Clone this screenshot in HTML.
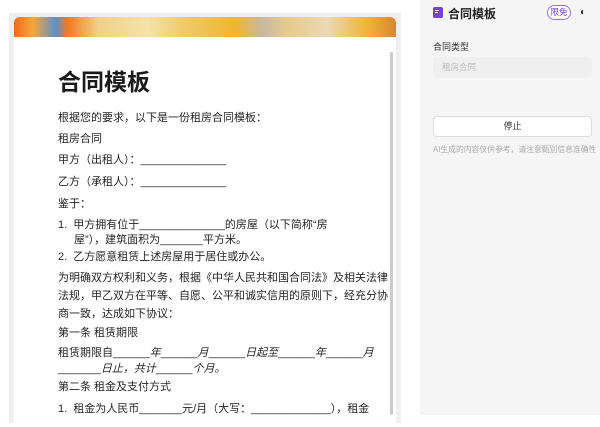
<!DOCTYPE html>
<html><head><meta charset="utf-8"><style>
*{margin:0;padding:0;box-sizing:border-box}
body{width:600px;height:415px;overflow:hidden;background:#fff;font-family:"Liberation Sans","Noto Sans CJK SC",sans-serif;color:#222;position:relative}
.frame{position:absolute;left:9px;top:13px;width:392px;height:410px;background:#efefef}
.card{position:absolute;left:14px;top:17px;width:382px;height:410px;background:#fff;border-radius:6px 6px 0 0;overflow:hidden}
.banner{height:20px;background:linear-gradient(90deg,#f26a1b 0%,#f5a63a 5%,#5c8fcb 11%,#f07a22 14%,#f0d08a 22%,#f5e2a8 35%,#efc96a 45%,#f1b62f 58%,#c9b9a0 65%,#e9c98e 72%,#ead9b6 82%,#f2b53b 92%,#d9872f 100%)}
.sb{position:absolute;left:390px;top:52px;width:3px;height:363px;background:#c8ccd2;border-radius:2px}
.t{position:absolute;font-size:11px;line-height:14px;white-space:nowrap;color:#262626}
.h{position:absolute;left:58px;top:63px;font-size:23px;font-weight:bold;color:#1a1a1a}
.i{font-style:italic}
.rp{position:absolute;left:420px;top:0;width:180px;height:415px;background:#f5f5f5}
</style></head><body>
<div class="frame"></div>
<div class="card"><div class="banner"></div></div>
<div class="sb"></div>
<div class="h">合同模板</div>
<div class="t" style="left:58px;top:111px">根据您的要求，以下是一份租房合同模板：</div>
<div class="t" style="left:58px;top:132px">租房合同</div>
<div class="t" style="left:58px;top:153px">甲方（出租人）：______________</div>
<div class="t" style="left:58px;top:175px">乙方（承租人）：______________</div>
<div class="t" style="left:58px;top:197px">鉴于：</div>
<div class="t" style="left:58px;top:218px">1.&nbsp; 甲方拥有位于______________的房屋（以下简称“房</div>
<div class="t" style="left:74px;top:233px">屋”），建筑面积为_______平方米。</div>
<div class="t" style="left:58px;top:250px">2.&nbsp; 乙方愿意租赁上述房屋用于居住或办公。</div>
<div class="t" style="left:58px;top:271px">为明确双方权利和义务，根据《中华人民共和国合同法》及相关法律</div>
<div class="t" style="left:58px;top:289px">法规，甲乙双方在平等、自愿、公平和诚实信用的原则下，经充分协</div>
<div class="t" style="left:58px;top:307px">商一致，达成如下协议：</div>
<div class="t" style="left:58px;top:326px">第一条 租赁期限</div>
<div class="t" style="left:58px;top:346px">租赁期限自______<span class="i">年</span>______<span class="i">月</span>______<span class="i">日起至</span>______<span class="i">年</span>______<span class="i">月</span></div>
<div class="t" style="left:58px;top:362px">_______<span class="i">日止，共计</span>______<span class="i">个月。</span></div>
<div class="t" style="left:58px;top:380px">第二条 租金及支付方式</div>
<div class="t" style="left:58px;top:402px">1.&nbsp; 租金为人民币_______元/月（大写：_____________），租金</div>
<div class="rp"></div>
<div style="position:absolute;left:433px;top:7px;width:10px;height:11px;background:#7b3fe0;border-radius:2px"></div>
<div style="position:absolute;left:435px;top:10px;width:4px;height:1px;background:#fff"></div>
<div style="position:absolute;left:435px;top:12px;width:3px;height:1px;background:#fff"></div>
<div style="position:absolute;left:448px;top:5px;font-size:12px;font-weight:bold;color:#222">合同模板</div>
<div style="position:absolute;left:547px;top:5px;width:24px;height:15px;border:1px solid #9b6cf0;border-radius:8px;font-size:8.5px;line-height:13px;text-align:center;color:#7b3fe0;background:#fff">限免</div>
<div style="position:absolute;left:580px;top:7px;font-size:10px;color:#333">◐</div>
<div style="position:absolute;left:433px;top:40px;font-size:9px;color:#333">合同类型</div>
<div style="position:absolute;left:433px;top:57px;width:159px;height:21px;background:#efefef;border-radius:4px;font-size:8.5px;line-height:21px;padding-left:9px;color:#bbb">租房合同</div>
<div style="position:absolute;left:433px;top:116px;width:159px;height:21px;background:#fff;border:1px solid #ddd;border-radius:4px;font-size:9px;line-height:19px;text-align:center;color:#333">停止</div>
<div style="position:absolute;left:433px;top:144px;font-size:7.8px;color:#aaa;white-space:nowrap">AI生成的内容仅供参考，请注意甄别信息准确性</div>
</body></html>
